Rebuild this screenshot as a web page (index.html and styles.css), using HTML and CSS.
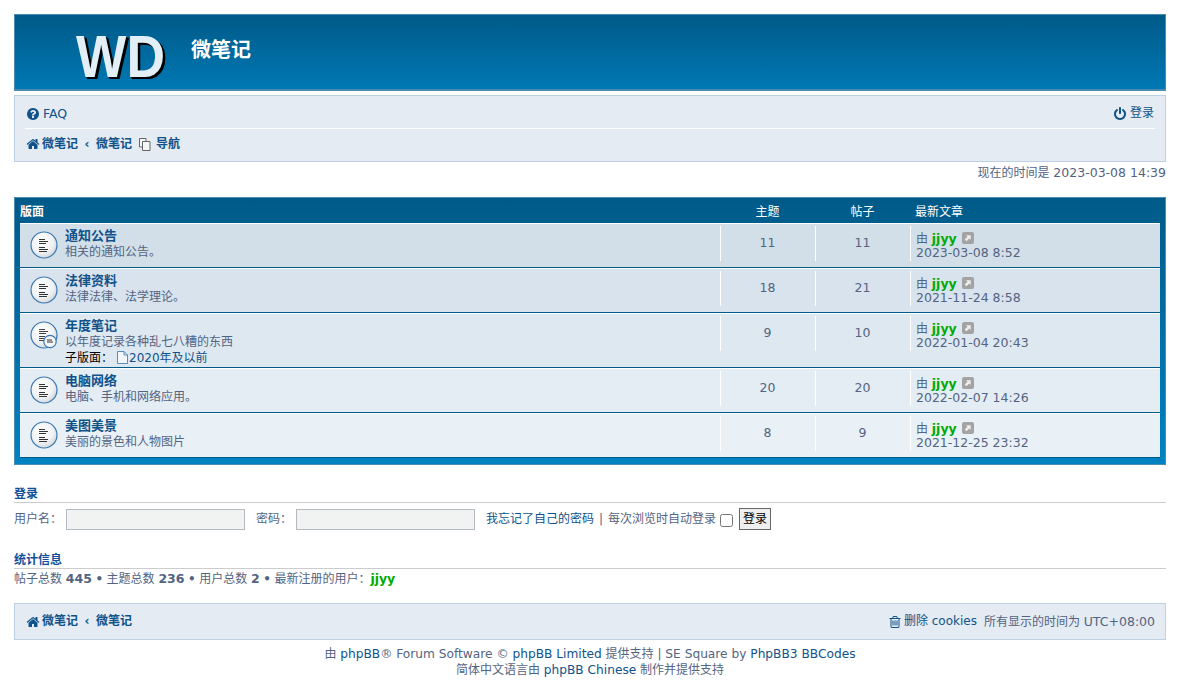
FILE: index.html
```html
<!DOCTYPE html>
<html lang="zh-CN">
<head>
<meta charset="utf-8">
<title>微笔记</title>
<link rel="stylesheet" href="styles.css">
</head>
<body>
<svg class="defs" width="0" height="0" aria-hidden="true">
  <defs>
    <radialGradient id="disc" cx="40%" cy="35%" r="75%">
      <stop offset="0" stop-color="#ffffff"/>
      <stop offset="0.6" stop-color="#f0f1f3"/>
      <stop offset="1" stop-color="#c9ced4"/>
    </radialGradient>
    <symbol id="forum" viewBox="0 0 28 28">
      <circle cx="14" cy="14" r="13" fill="url(#disc)" stroke="#3a78b0" stroke-width="1.2"/>
      <path d="M9 8.500h6M9 10.500h9M9 12.500h7M9 16.500h6M9 18.500h9M9 20.500h8" stroke="#333" stroke-width="1" fill="none"/>
    </symbol>
    <symbol id="sub" viewBox="0 0 28 28">
      <circle cx="14" cy="14" r="13" fill="url(#disc)" stroke="#3a78b0" stroke-width="1.2"/>
      <path d="M9 8.500h6M9 10.500h9M9 12.500h7M9 15.500h6M9 17.500h6M9 19.500h6" stroke="#444" stroke-width="1" fill="none"/>
      <circle cx="20" cy="20.500" r="6.200" fill="#f4f5f6" stroke="#3a78b0" stroke-width="1.200"/>
      <path d="M17 19h5M17 21h6" stroke="#333" stroke-width="1" fill="none"/>
    </symbol>
    <symbol id="home" viewBox="0 0 1792 1792">
      <path d="M1472 992v480q0 26-19 45t-45 19h-384v-384h-256v384h-384q-26 0-45-19t-19-45v-480q0-1 .5-3t.5-3l575-474 575 474q1 2 1 6zm223-69l-62 74q-8 9-21 11h-3q-13 0-21-7l-692-577-692 577q-12 8-24 7-13-2-21-11l-62-74q-8-10-7-23.500t11-21.500l719-599q32-26 76-26t76 26l244 204v-195q0-14 9-23t23-9h192q14 0 23 9t9 23v408l219 182q10 8 11 21.500t-7 23.500z" fill="currentColor"/>
    </symbol>
    <symbol id="link" viewBox="0 0 12 12">
      <rect width="12" height="12" rx="2" fill="#a3a3a3"/>
      <path d="M4 3.300h4.700V8L7.200 6.500 4.400 9.300 2.700 7.600 5.500 4.800z" fill="#eee"/>
    </symbol>
  </defs>
</svg>
<div class="page">
  <header class="banner">
    <span class="logo">WD</span>
    <span class="site-name">微笔记</span>
  </header>

  <nav class="panel nav-main">
    <div class="nav-row nav-top">
      <a class="nav-link">
        <svg class="ico" viewBox="0 0 1792 1792"><path d="M1024 1376v-192q0-14-9-23t-23-9h-192q-14 0-23 9t-9 23v192q0 14 9 23t23 9h192q14 0 23-9t9-23zm256-672q0-88-55.500-163t-138.500-116-170-41q-243 0-371 213-15 24 8 42l132 100q7 6 19 6 16 0 25-12 53-68 86-92 34-24 86-24 48 0 85.500 26t37.500 59q0 38-20 61t-68 45q-63 28-115.500 86.500t-52.500 125.500v36q0 14 9 23t23 9h192q14 0 23-9t9-23q0-19 21.500-49.500t54.500-49.500q32-18 49-28.500t46-35 44.500-48 28-60.500 12.500-81zm384 192q0 209-103 385.500t-279.500 279.500-385.500 103-385.500-103-279.500-279.500-103-385.500 103-385.500 279.500-279.500 385.500-103 385.500 103 279.500 279.500 103 385.500z" fill="currentColor"/></svg>
        <span class="en">FAQ</span>
      </a>
      <a class="nav-link">
        <svg class="ico" viewBox="0 0 1792 1792"><path d="M1664 896q0 156-61 298t-164 245-245 164-298 61-298-61-245-164-164-245-61-298q0-182 80.500-343t226.500-270q43-32 95.500-25t83.500 50q32 42 24.500 94.500t-49.500 84.500q-98 74-151.500 181t-53.500 228q0 104 40.500 198.500t109.500 163.500 163.500 109.500 198.500 40.500 198.500-40.500 163.500-109.500 109.500-163.500 40.500-198.500q0-121-53.500-228t-151.500-181q-42-32-49.500-84.500t24.500-94.500q31-43 84-50t95 25q146 109 226.500 270t80.500 343zm-640-768v640q0 52-38 90t-90 38-90-38-38-90v-640q0-52 38-90t90-38 90 38 38 90z" fill="currentColor"/></svg>
        登录
      </a>
    </div>
    <div class="nav-row crumbs">
      <svg class="ico-home"><use href="#home"/></svg>
      <a class="crumb">微笔记</a>
      <span class="crumb-sep">‹</span>
      <a class="crumb">微笔记</a>
      <svg class="ico-copy" viewBox="0 0 12 13"><path d="M.5.500h6.500v8.500h-6.500z" fill="#f4f6f8" stroke="#666"/><path d="M3.500 3.500h7.500v9h-7.500z" fill="#f4f6f8" stroke="#666"/></svg>
      <a class="crumb">导航</a>
    </div>
  </nav>

  <p class="time-now">现在的时间是 <span class="en">2023-03-08 14:39</span></p>

  <section class="forums">
    <div class="forum-head">
      <div class="col-main head-main">版面</div>
      <div class="col-num">主题</div>
      <div class="col-num">帖子</div>
      <div class="col-last">最新文章</div>
    </div>

    <div class="forum-row r1">
      <div class="col-main">
        <svg class="forum-ico"><use href="#forum"/></svg>
        <div class="forum-text">
          <a class="forum-title">通知公告</a>
          <div>相关的通知公告。</div>
        </div>
      </div>
      <div class="col-num"><span class="en">11</span></div>
      <div class="col-num"><span class="en">11</span></div>
      <div class="col-last">由 <a class="user">jjyy</a> <svg class="ico-link"><use href="#link"/></svg><br><span class="en">2023-03-08 8:52</span></div>
    </div>

    <div class="forum-row r2">
      <div class="col-main">
        <svg class="forum-ico"><use href="#forum"/></svg>
        <div class="forum-text">
          <a class="forum-title">法律资料</a>
          <div>法律法律、法学理论。</div>
        </div>
      </div>
      <div class="col-num"><span class="en">18</span></div>
      <div class="col-num"><span class="en">21</span></div>
      <div class="col-last">由 <a class="user">jjyy</a> <svg class="ico-link"><use href="#link"/></svg><br><span class="en">2021-11-24 8:58</span></div>
    </div>

    <div class="forum-row r3">
      <div class="col-main">
        <svg class="forum-ico"><use href="#sub"/></svg>
        <div class="forum-text">
          <a class="forum-title">年度笔记</a>
          <div>以年度记录各种乱七八糟的东西</div>
          <div class="subforum"><strong>子版面：</strong><svg class="ico-file" viewBox="0 0 11 13"><path d="M.5.500h6.500l3.500 3.500v8.500H.5z" fill="#f2f6fa" stroke="#5b8db8"/><path d="M7 .5V4h3.500" fill="none" stroke="#5b8db8"/></svg><a class="sub-link">2020年及以前</a>
          </div>
        </div>
      </div>
      <div class="col-num"><span class="en">9</span></div>
      <div class="col-num"><span class="en">10</span></div>
      <div class="col-last">由 <a class="user">jjyy</a> <svg class="ico-link"><use href="#link"/></svg><br><span class="en">2022-01-04 20:43</span></div>
    </div>

    <div class="forum-row r4">
      <div class="col-main">
        <svg class="forum-ico"><use href="#forum"/></svg>
        <div class="forum-text">
          <a class="forum-title">电脑网络</a>
          <div>电脑、手机和网络应用。</div>
        </div>
      </div>
      <div class="col-num"><span class="en">20</span></div>
      <div class="col-num"><span class="en">20</span></div>
      <div class="col-last">由 <a class="user">jjyy</a> <svg class="ico-link"><use href="#link"/></svg><br><span class="en">2022-02-07 14:26</span></div>
    </div>

    <div class="forum-row r5">
      <div class="col-main">
        <svg class="forum-ico"><use href="#forum"/></svg>
        <div class="forum-text">
          <a class="forum-title">美图美景</a>
          <div>美丽的景色和人物图片</div>
        </div>
      </div>
      <div class="col-num"><span class="en">8</span></div>
      <div class="col-num"><span class="en">9</span></div>
      <div class="col-last">由 <a class="user">jjyy</a> <svg class="ico-link"><use href="#link"/></svg><br><span class="en">2021-12-25 23:32</span></div>
    </div>
  </section>

  <section class="login">
    <h3 class="sec-title">登录</h3>
    <form class="login-form">
      <label>用户名：</label><input class="field" type="text">
      <label class="pw-label">密码：</label><input class="field" type="password">
      <span class="login-extra"><a class="forgot">我忘记了自己的密码</a><span class="bar">|</span>每次浏览时自动登录</span>
      <input class="check" type="checkbox">
      <button class="btn" type="button">登录</button>
    </form>
  </section>

  <section class="stats">
    <h3 class="sec-title">统计信息</h3>
    <p class="stats-line">帖子总数 <b>445</b><span class="dot">•</span>主题总数 <b>236</b><span class="dot">•</span>用户总数 <b>2</b><span class="dot">•</span>最新注册的用户：<a class="user">jjyy</a></p>
  </section>

  <nav class="panel nav-foot">
    <div class="nav-row crumbs">
      <svg class="ico-home"><use href="#home"/></svg>
      <a class="crumb">微笔记</a>
      <span class="crumb-sep">‹</span>
      <a class="crumb">微笔记</a>
    </div>
    <div class="foot-right">
      <svg class="ico-trash" viewBox="0 0 1792 1792"><path d="M704 736v576q0 14-9 23t-23 9h-64q-14 0-23-9t-9-23v-576q0-14 9-23t23-9h64q14 0 23 9t9 23zm256 0v576q0 14-9 23t-23 9h-64q-14 0-23-9t-9-23v-576q0-14 9-23t23-9h64q14 0 23 9t9 23zm256 0v576q0 14-9 23t-23 9h-64q-14 0-23-9t-9-23v-576q0-14 9-23t23-9h64q14 0 23 9t9 23zm128 724v-948h-896v948q0 22 7 40.500t14.500 27 10.500 8.500h832q3 0 10.500-8.500t14.500-27 7-40.500zm-672-1076h448l-48-117q-7-9-17-11h-317q-10 2-17 11zm928 32v64q0 14-9 23t-23 9h-96v948q0 83-47 143.500t-113 60.500h-832q-66 0-113-58.500t-47-141.500v-952h-96q-14 0-23-9t-9-23v-64q0-14 9-23t23-9h309l70-167q15-37 54-63t79-26h320q40 0 79 26t54 63l70 167h309q14 0 23 9t9 23z" fill="currentColor"/></svg>
      <a class="foot-link">删除 cookies</a>
      <span class="tz">所有显示的时间为 <span class="en">UTC+08:00</span></span>
    </div>
  </nav>

  <footer class="copyright">
    <p>由 <a class="en">phpBB</a><span class="en">® Forum Software © </span><a class="en">phpBB Limited</a> 提供支持 <span class="en">| SE Square by </span><a class="en">PhpBB3 BBCodes</a></p>
    <p>简体中文语言由 <a class="en">phpBB Chinese</a> 制作并提供支持</p>
  </footer>
</div>
</body>
</html>
```

FILE: styles.css
```css
* { box-sizing: border-box; }
html, body { margin: 0; padding: 0; background: #fff; }
body {
  font-family: "DejaVu Sans", "Noto Sans CJK SC", sans-serif;
  font-size: 12px;
  line-height: 15px;
  color: #536482;
}
.defs { position: absolute; }
.en { font-size: 12.5px; }
a { color: #105289; text-decoration: none; }
p { margin: 0; }
.page { padding: 14px 14px 0; width: 1180px; }

.banner {
  height: 77px;
  display: flex;
  align-items: flex-start;
  padding-left: 61px;
  background: linear-gradient(#005a88, #0078b4);
  border: 1px solid #4d8cb0;
  border-bottom: 2px solid #4d8cb0;
}
.logo {
  font-family: "Liberation Sans", sans-serif;
  font-weight: 700;
  font-size: 60px;
  line-height: 60px;
  margin-top: 12px;
  color: #e3eff6;
  text-shadow: 1px 1px 0 #000, 2px 2px 0 #000, 3px 2px 0 #000;
  transform: scaleX(.89);
  transform-origin: left top;
}
.site-name {
  margin: 22px 0 0 15px;
  font-size: 20px;
  line-height: 26px;
  font-weight: 700;
  color: #fff;
}

.panel {
  background: #e4ebf3;
  border: 1px solid #bcd2e4;
}
.nav-main { margin-top: 4px; height: 67px; padding: 0 10px; }
.nav-row { display: flex; align-items: center; }
.nav-top {
  justify-content: space-between;
  height: 33px;
  padding: 3px 1px 0 1px;
  border-bottom: 1px solid #fff;
}
.nav-link { display: inline-flex; align-items: center; gap: 3px; color: #105289; }
.ico { width: 14px; height: 14px; }
.crumbs { height: 30px; padding-left: 1px; }
.ico-home { width: 14px; height: 14px; color: #105289; margin-right: 2px; }
.crumb { font-weight: 700; color: #105289; }
.crumb-sep { width: 18px; text-align: center; font-weight: 700; color: #105289; }
.ico-copy { width: 12px; height: 13px; margin: 1px 5px 0 7px; }

.time-now { text-align: right; height: 35px; padding-top: 3px; }

.forums {
  height: 268px;
  padding: 0 5px;
  border: 1px solid #4d8cb0;
  background: linear-gradient(#005a88, #0082c2);
}
.forum-head {
  display: flex;
  height: 25px;
  color: #fff;
  align-items: center;
  padding-top: 3px;
}
.head-main { font-weight: 700; }
.forum-row {
  display: flex;
  height: 45px;
  border-top: 1px solid #fff;
  border-bottom: 1px solid #005a88;
}
.r1 { background: #d2dfe9; }
.r2 { background: #d8e3ed; }
.r3 { background: #dee8f1; height: 55px; }
.r4 { background: #e4edf4; }
.r5 { background: #e9f1f6; }
.col-main { width: 700px; display: flex; }
.forum-row .col-main { padding: 2px 0 0 10px; }
.col-num { width: 95px; text-align: center; }
.col-last { width: 250px; padding-left: 5px; }
.forum-row .col-num, .forum-row .col-last {
  margin-top: 2px;
  height: 35px;
  border-left: 1px solid #fff;
}
.forum-row .col-num { line-height: 33px; padding-right: 1px; }
.forum-row .col-last { line-height: 14px; padding-top: 6px; }
.forum-ico { width: 28px; height: 28px; margin: 5px 7px 0 0; flex: none; }
.forum-title { font-size: 13px; font-weight: 700; color: #105289; display: block; line-height: 19px; }
.subforum { color: #000; margin-top: 1px; }
.subforum strong { font-weight: 400; }
.ico-file { width: 11px; height: 13px; vertical-align: -2px; margin: 0 1px 0 4px; }
.sub-link { color: #105289; }
.user { color: #00aa00; font-weight: 700; font-size: 12.5px; }
.ico-link { width: 12px; height: 12px; vertical-align: -1px; margin-left: 1px; }

.login { margin-top: 21px; }
.sec-title {
  margin: 0;
  font-size: 12px;
  line-height: 16px;
  height: 17px;
  font-weight: 700;
  color: #115098;
  border-bottom: 1px solid #ccc;
}
.login-form { display: flex; align-items: center; height: 33px; padding-bottom: 1px; }
.field {
  width: 179px;
  height: 21px;
  margin: 0 0 0 4px;
  padding: 0;
  background: #f1f3f3;
  border: 1px solid #b4bac0;
}
.pw-label { margin-left: 11px; }
.login-extra { margin-left: 11px; }
.forgot { color: #105289; }
.bar { margin: 0 5px; }
.check { width: 13px; height: 13px; margin: 2px 6px 0 4px; }
.btn {
  width: 32px;
  height: 22px;
  padding: 0;
  font: inherit;
  color: #000;
  background: #efefef;
  border: 1px solid #666;
}
.stats { margin-top: 16px; }
.stats-line { padding-top: 2px; }
.stats-line b { font-size: 12.5px; }
.dot { margin: 0 3.5px; font-weight: 700; }

.nav-foot {
  margin-top: 16px;
  height: 37px;
  padding: 0 10px;
  display: flex;
  justify-content: space-between;
  align-items: center;
}
.foot-right { display: flex; align-items: center; }
.ico-trash { width: 14px; height: 14px; color: #105289; margin-right: 2px; }
.foot-link { color: #105289; }
.tz { margin-left: 7px; }
.copyright { text-align: center; padding-top: 6px; line-height: 16px; }
.copyright .en { font-size: 12.2px; }
```
